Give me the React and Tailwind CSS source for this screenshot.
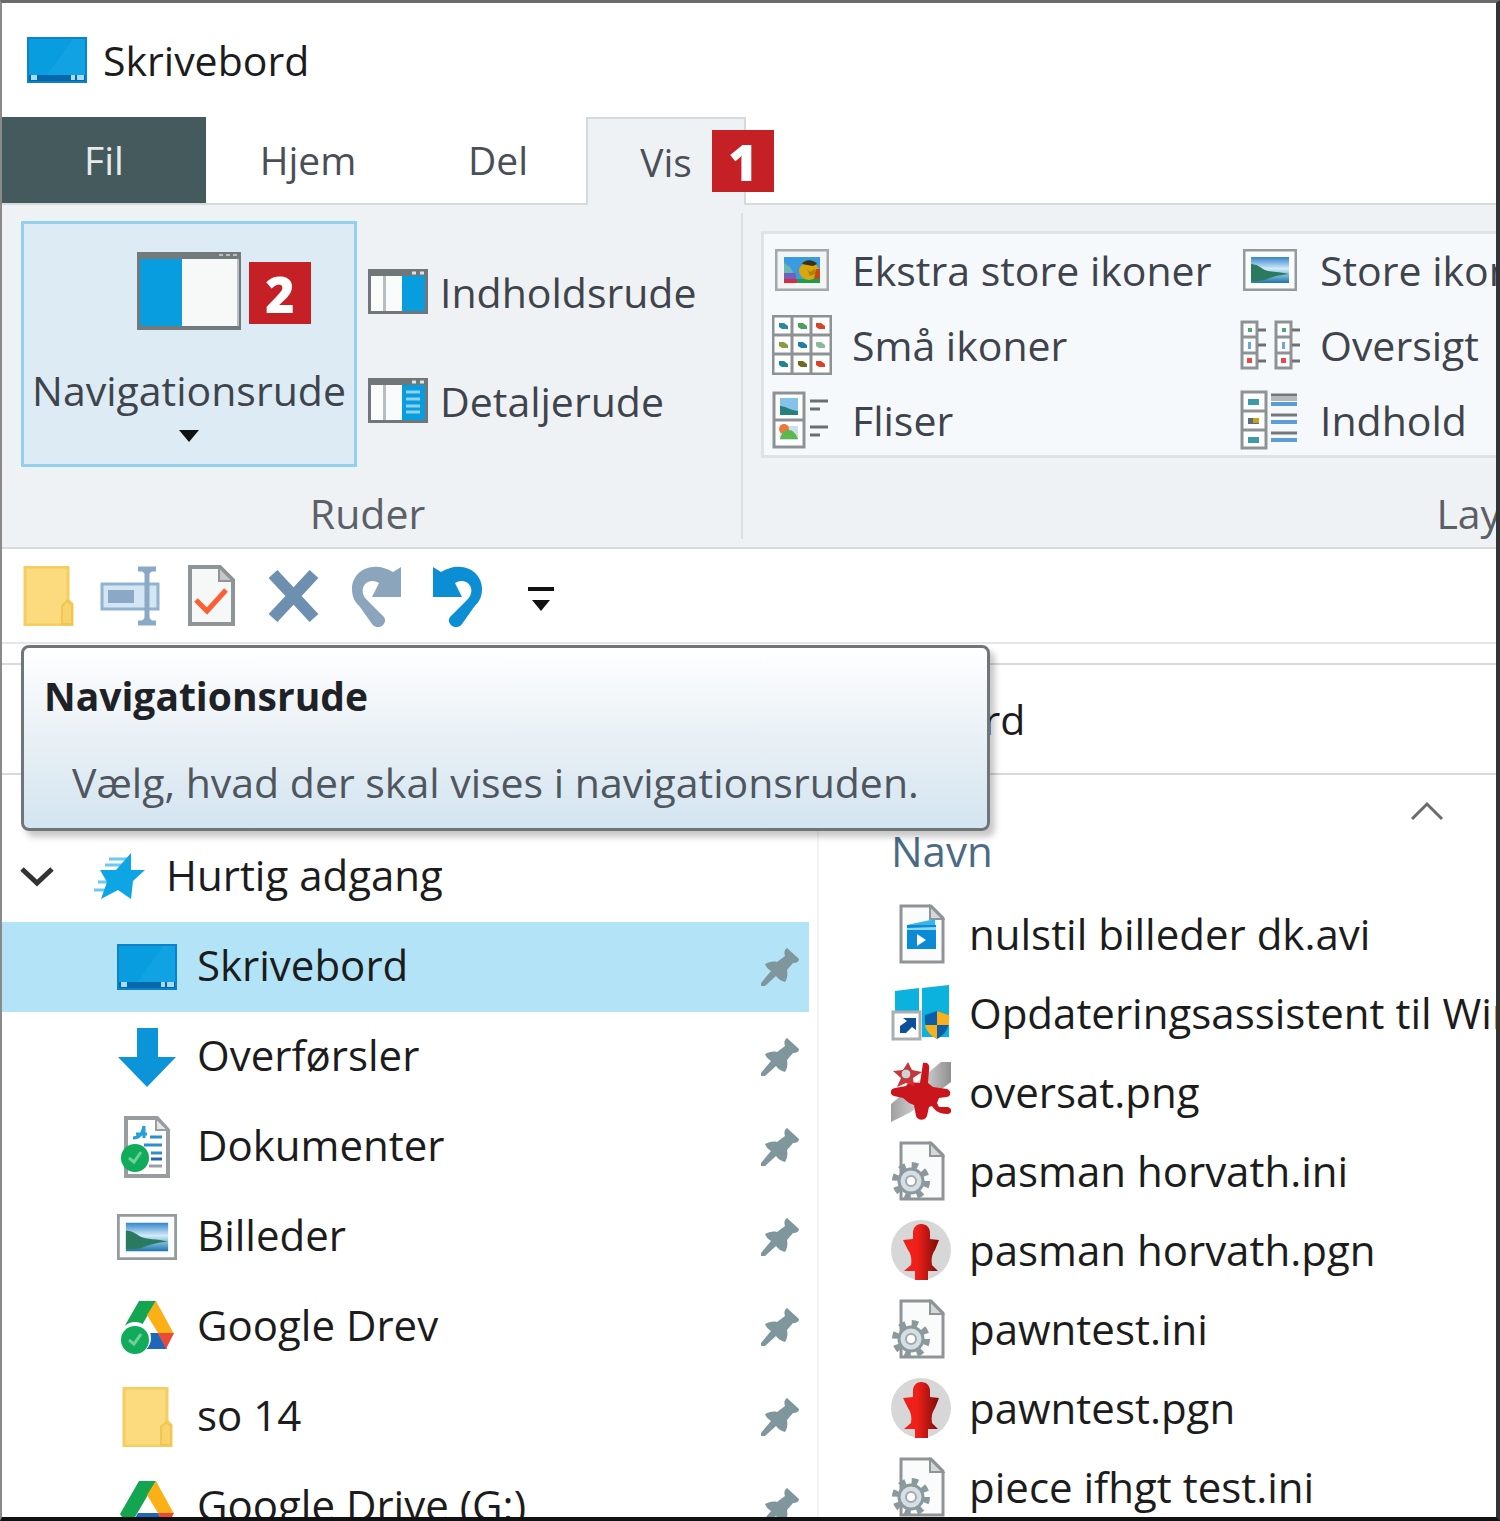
import React, { useState } from 'react';
import clsx from 'clsx';

const DesktopIcon = () => (
  <svg width="60" height="46" viewBox="0 0 60 46">
    <rect width="60" height="46" fill="#0b83cc" />
    <rect x="2" y="2" width="56" height="36" fill="#079ddf" />
    <path d="M58 2v36H20L46 2z" fill="#10a2e2" />
    <rect x="2" y="38" width="56" height="6" fill="#0668a8" />
    <path d="M4 38h6v5H4zM44 38h4v5h-4zM50 38h7v5h-7z" fill="#a8dcf5" />
  </svg>
);

const NavPaneIcon = () => (
  <svg width="104" height="78" viewBox="0 0 104 78">
    <rect width="104" height="78" fill="#737a7c" />
    <rect x="3" y="7" width="98" height="67" fill="#f7f8f8" />
    <rect x="3" y="7" width="42" height="67" fill="#079ddf" />
    <path d="M82 3h4M89 3h4M96 3h4" stroke="#b9bec0" strokeWidth="2" />
    <path d="M101 7v67" stroke="#b9bec0" strokeWidth="2" />
  </svg>
);

const SidePaneIcon = ({ lines }) => (
  <svg width="60" height="45" viewBox="0 0 60 45">
    <rect width="60" height="45" fill="#6f777a" />
    <path d="M3 7h12v35H3zM18 7h16v35H18z" fill="#fafbfb" />
    <rect x="15" y="7" width="3" height="35" fill="#b8bdbf" />
    <rect x="34" y="7" width="23" height="35" fill="#079ddf" />
    <path d="M44 4h4M52 4h4" stroke="#dfe3e4" strokeWidth="3" />
    {lines && <path d="M38 14h14M38 21h14M38 28h14M38 34h14" stroke="#8fd2f2" strokeWidth="3" />}
  </svg>
);

const PictureIcon = ({ wide }) => (
  <svg width={wide ? 60 : 54} height={wide ? 46 : 42} viewBox="0 0 54 42" preserveAspectRatio="none">
    <defs>
      <linearGradient id="sky" x1="0" y1="0" x2="0" y2="1">
        <stop offset="0" stopColor="#3585cc" />
        <stop offset="0.45" stopColor="#d2ebf8" />
        <stop offset="0.7" stopColor="#7bbad6" />
        <stop offset="1" stopColor="#1f74ac" />
      </linearGradient>
    </defs>
    <rect x="1" y="1" width="52" height="40" fill="#fbfcfc" stroke="#959b9d" strokeWidth="3" />
    <rect x="8" y="8" width="38" height="26" fill="url(#sky)" />
    <path d="M8 15c6 0 10 4 14 6s14 2 24 4c-10 1-18 3-24 6-4 1-9 1-14 1z" fill="#2b7a60" />
  </svg>
);

const ExtraLargeIcon = () => (
  <svg width="54" height="42" viewBox="0 0 54 42">
    <rect x="1" y="1" width="52" height="40" fill="#f3f5f5" stroke="#a3a8aa" strokeWidth="3" />
    <rect x="9" y="8" width="36" height="26" fill="#3b9be2" />
    <path d="M9 14l6 4 5 8H9z" fill="#6ab6b0" />
    <path d="M9 24h12v7H9z" fill="#6a63c4" />
    <path d="M9 30h14v4H9z" fill="#e0283c" />
    <path d="M22 30h23v4H22z" fill="#1a9d4c" />
    <ellipse cx="34" cy="22" rx="10" ry="9" fill="#d9a70d" />
    <path d="M27 15c3-5 11-5 15 0l-4 2-6-1z" fill="#3b3212" />
    <path d="M41 20h4v10h-6z" fill="#c2491d" />
    <path d="M32 20l3 3 5-3v5l-5 2z" fill="#a8860c" />
  </svg>
);

const gridDots = [
  [11, 11, '#2a8a9a'], [30, 11, '#49a05c'], [48, 11, '#d8432a'],
  [11, 30, '#8b9b45'], [30, 30, '#1f7f9e'], [48, 30, '#8cb79a'],
  [11, 49, '#1f8590'], [30, 49, '#6d6a24'], [48, 49, '#d8432a'],
];

const SmallGridIcon = () => (
  <svg width="60" height="60" viewBox="0 0 60 60">
    <rect x="1" y="1" width="58" height="58" fill="#fdfdfd" stroke="#8d9395" strokeWidth="3" />
    <path d="M20 1v58M39 1v58M1 20h58M1 39h58" stroke="#8d9395" strokeWidth="3" />
    {gridDots.map(([x, y, color]) => (
      <path key={`${x}-${y}`} d={`M${x - 4} ${y - 3}h5l4 3v3h-6l-3-2z`} fill={color} />
    ))}
  </svg>
);

const TilesIcon = () => (
  <svg width="60" height="58" viewBox="0 0 60 58">
    <rect x="2" y="2" width="30" height="54" fill="#fdfdfd" stroke="#8d9395" strokeWidth="3" />
    <path d="M2 29h30" stroke="#8d9395" strokeWidth="3" />
    <rect x="8" y="7" width="18" height="17" fill="#86c3e8" />
    <path d="M8 15c6 0 9 4 18 5v4H8z" fill="#2a7f7c" />
    <rect x="8" y="35" width="18" height="14" fill="#c9dff0" />
    <circle cx="12" cy="38" r="5" fill="#e8793a" />
    <path d="M8 48c2-7 5-9 9-9s7 4 9 9z" fill="#5cb848" />
    <path d="M38 10h18M38 18h10M38 36h18M38 44h10" stroke="#6a7072" strokeWidth="3" />
  </svg>
);

const ListColumnsIcon = () => (
  <svg width="60" height="50" viewBox="0 0 60 50">
    {[0, 34].map((x) => (
      <g key={x} transform={`translate(${x} 0)`}>
        <rect x="2" y="2" width="15" height="46" fill="#fdfdfd" stroke="#8d9395" strokeWidth="3" />
        <path d="M2 17h15M2 33h15" stroke="#8d9395" strokeWidth="3" />
        <path d="M18 10h8M18 25h8M18 41h8" stroke="#6c7274" strokeWidth="3" />
        <rect x="8" y="8" width="4" height="4" fill="#4fa57a" />
        <rect x="8" y="22" width="3" height="7" fill="#6aa6dc" />
        <rect x="7" y="38" width="5" height="5" fill="#e5484d" />
      </g>
    ))}
  </svg>
);

const ContentIcon = () => (
  <svg width="60" height="60" viewBox="0 0 60 60">
    <rect x="2" y="2" width="24" height="56" fill="#fdfdfd" stroke="#8d9395" strokeWidth="3" />
    <path d="M2 21h24M2 40h24" stroke="#8d9395" strokeWidth="3" />
    <path d="M8 9h11v6H8zM8 47h11v6H8z" fill="#3d9aa6" />
    <path d="M8 28h11v6H8z" fill="#5b6d7a" />
    <path d="M13 28h6v5h-6z" fill="#c3a21c" />
    <path d="M31 5h26M31 25h26M31 43h26" stroke="#73797b" strokeWidth="3" />
    <path d="M31 14h26M31 32h26M31 50h26" stroke="#5d9dd5" strokeWidth="4" />
    <path d="M31 9h26" stroke="#b3b8bb" strokeWidth="4" />
  </svg>
);

const FolderIcon = () => (
  <svg width="60" height="60" viewBox="0 0 60 60">
    <path d="M7 1h43v33l4 4v21H7z" fill="#fbdb7e" stroke="#f5cd60" strokeWidth="3" />
    <path d="M44 58V40l5-5 5 4v19z" fill="#f8d46c" stroke="#f0c552" strokeWidth="2" />
  </svg>
);

const RenameIcon = () => (
  <svg width="60" height="60" viewBox="0 0 60 60">
    <rect x="2" y="18" width="56" height="25" fill="#d4e6f3" stroke="#8fb3d0" strokeWidth="3" />
    <rect x="8" y="24" width="26" height="13" fill="#8ba9c4" />
    <path d="M47 3v54M38 3h18M38 57h18" stroke="#8ba9c4" strokeWidth="5" />
    <path d="M41 4h12l-6 6zM41 56h12l-6-7z" fill="#8ba9c4" />
  </svg>
);

const CheckDocIcon = () => (
  <svg width="60" height="62" viewBox="0 0 60 62">
    <path d="M8 2h30l13 13v44H8z" fill="#f6f7f7" stroke="#8f9496" strokeWidth="4" />
    <path d="M37 2v14h14z" fill="#c3c7c8" stroke="#8f9496" strokeWidth="2" />
    <path d="M14 35l11 11 19-21" fill="none" stroke="#fb6033" strokeWidth="5" />
  </svg>
);

const DeleteIcon = () => (
  <svg width="60" height="62" viewBox="0 0 60 62">
    <path d="M9 9l41 44M50 9L9 53" stroke="#6d90b0" strokeWidth="12" />
  </svg>
);

const UndoIcon = ({ color, flip }) => (
  <svg width="60" height="64" viewBox="0 0 60 64">
    <g transform={flip ? 'translate(60 0) scale(-1 1)' : undefined} fill={color}>
      <path d="M5 3l8 5c7-4 14-6 20-5 13 1 21 11 21 22 0 8-3 13-8 18L34 60c-3 4-8 4-11 1s-3-7 1-10l15-15c4-4 5-8 4-12-2-7-10-9-16-5l7 14H5z" />
    </g>
  </svg>
);

const MoreIcon = () => (
  <svg width="28" height="28" viewBox="0 0 28 28" className="mt-2">
    <rect x="2" y="1" width="26" height="4" fill="#111" />
    <path d="M6 14h18l-9 11z" fill="#111" />
  </svg>
);

const StarIcon = () => (
  <svg width="54" height="48" viewBox="0 0 54 48">
    <path d="M16 6h20M12 12h22M5 29h12M1 37h14" stroke="#6cc8ee" strokeWidth="3" />
    <path d="M38 0v17h14L40 28l-2 18-13-9-17 9 6-17-7-12h16z" fill="#0ea5e4" />
  </svg>
);

const DownloadIcon = () => (
  <svg width="60" height="60" viewBox="0 0 60 60">
    <path d="M20 1h21v29h18L30 60 1 30h19z" fill="#0c94d8" />
  </svg>
);

const SyncBadge = () => (
  <g>
    <circle cx="18" cy="42" r="14" fill="#10ab5b" />
    <path d="M12 42l5 4 7-10" fill="none" stroke="#6fd09c" strokeWidth="3" />
  </g>
);

const DocumentIcon = () => (
  <svg width="60" height="62" viewBox="0 0 60 62">
    <path d="M9 2h31l11 12v46H9z" fill="#fff" stroke="#989d9f" strokeWidth="4" />
    <path d="M39 2v12h12z" fill="#e4e7e8" stroke="#989d9f" strokeWidth="2" />
    <path d="M16 22c7 0 9-4 11-12v12M19 18h11" fill="none" stroke="#25a0d8" strokeWidth="3" />
    <path d="M33 21h12M27 29h18M34 37h11" stroke="#2f8fcd" strokeWidth="3" />
    <path d="M34 43h11" stroke="#2b64a6" strokeWidth="3" />
    <path d="M32 50h13" stroke="#9aa0a2" strokeWidth="3" />
    <SyncBadge />
  </svg>
);

const DriveIcon = ({ synced }) => (
  <svg width="60" height="58" viewBox="0 0 60 58">
    <path d="M22 3h17L21 34l-9 15L3 36z" fill="#14a551" />
    <path d="M39 3l18 33-16-1-11-18z" fill="#fbb116" />
    <path d="M12 51l9-16h20l9 16z" fill="#1f67b8" />
    <path d="M41 35h16l-8 16z" fill="#ea4a35" />
    {synced && <circle cx="18" cy="40" r="16" fill="#fff" />}
    {synced && <SyncBadge />}
  </svg>
);

const PinIcon = () => (
  <svg width="38" height="38" viewBox="0 0 38 38">
    <path d="M26 0l12 11c0 3-3 4-6 4l-6 7c1 5 0 9-2 12-4-1-7-3-9-6L4 38H0v-3l10-12c-3-2-5-4-6-7 4-2 8-3 12-2l8-6c-1-3-1-6 2-8z" fill="#7f969d" />
  </svg>
);

const PagePath = () => (
  <>
    <path d="M10 2h30l12 12v44H10z" fill="#fafbfb" stroke="#8f9496" strokeWidth="3" />
    <path d="M39 2v13h13z" fill="#d5d8d9" stroke="#8f9496" strokeWidth="2" />
  </>
);

const VideoFileIcon = () => (
  <svg width="60" height="60" viewBox="0 0 60 60">
    <PagePath />
    <path d="M16 21l28-6v6z" fill="#35b8e8" />
    <rect x="16" y="21" width="29" height="24" fill="#0c8ad6" />
    <path d="M16 26h29v-3l-29 1z" fill="#8bd7f5" />
    <path d="M26 30l9 6-9 6z" fill="#fff" />
  </svg>
);

const WindowsIcon = () => (
  <svg width="60" height="60" viewBox="0 0 60 60">
    <path d="M4 8l24-3v24H4zM31 5l27-3v52H31z" fill="#0bb2de" />
    <rect x="2" y="29" width="27" height="27" fill="#fff" stroke="#a9afb1" strokeWidth="3" />
    <path d="M9 50v-7l7-5-4-3h13v12l-4-3-6 6z" fill="#0d4f98" />
    <path d="M46 28l12 4c1 12-3 19-12 24-9-5-13-12-12-24z" fill="#0b5ea8" />
    <path d="M46 28l12 4v10H46zM34 42h12v14c-6-3-11-8-12-14z" fill="#fab01b" />
  </svg>
);

const SplashIcon = () => (
  <svg width="60" height="60" viewBox="0 0 60 60">
    <defs>
      <linearGradient id="ribbon" x1="0" x2="1">
        <stop offset="0" stopColor="#a0a0a0" />
        <stop offset="0.5" stopColor="#d8d8d8" />
        <stop offset="1" stopColor="#8f8f8f" />
      </linearGradient>
    </defs>
    <path d="M50 0h10v20L20 50 0 60V42z" fill="url(#ribbon)" />
    <path d="M32 1c5-1 7 2 6 7l-1 13 5 4 14 2c5 2 4 8-1 8l-7 1-2 5 2 4h9c5 2 4 7-1 7-7 0-12-3-15-8l-3 1-2 9c-2 5-9 5-11 0l-2-11-5-2-6-5-9-2c-5-2-4-7 1-8l11-2 3-4 11 1z" fill="#c9151b" />
    <path d="M17 0l4 8 10 2-9 6 1 8-8-3-9 4 4-9-8-7 10-1z" fill="#c9353a" />
    <circle cx="15" cy="12" r="5" fill="#d8cccc" stroke="#8d3c3e" strokeWidth="1" />
  </svg>
);

const ConfigFileIcon = () => (
  <svg width="60" height="60" viewBox="0 0 60 60">
    <PagePath />
    <circle cx="20" cy="40" r="16" fill="none" stroke="#8b999e" strokeWidth="6" strokeDasharray="6.3 6.3" />
    <circle cx="20" cy="40" r="12" fill="#d5dfe3" stroke="#8b999e" strokeWidth="3" />
    <circle cx="20" cy="40" r="5" fill="#fff" stroke="#9faaae" strokeWidth="2" />
  </svg>
);

const PawnIcon = () => (
  <svg width="60" height="60" viewBox="0 0 60 60">
    <defs>
      <linearGradient id="pawn" x1="0" x2="1">
        <stop offset="0.4" stopColor="#ee2019" />
        <stop offset="1" stopColor="#7c0b08" />
      </linearGradient>
    </defs>
    <circle cx="30" cy="30" r="30" fill="#d7d7d7" />
    <path d="M30 4c6 0 9 4 9 9v6l9 1-4 10c-3 4-4 9-3 15l6 6H37v9H24v-9H13l7-6c1-6 0-11-3-15l-5-10 10-1v-6c0-5 3-9 8-9z" fill="url(#pawn)" />
  </svg>
);

const Badge = ({ children, className }) => (
  <span
    className={clsx(
      'absolute w-[62px] h-[62px] bg-[#c52026] text-white text-[50px] leading-[64px] font-extrabold text-center',
      className
    )}
  >
    {children}
  </span>
);

const tabs = [
  { label: 'Hjem', width: 'w-[204px]' },
  { label: 'Del', width: 'w-[176px]' },
  { label: 'Vis', width: 'w-[160px]', badge: '1' },
];

const layouts = [
  { label: 'Ekstra store ikoner', icon: ExtraLargeIcon },
  { label: 'Store ikoner', icon: PictureIcon },
  { label: 'Små ikoner', icon: SmallGridIcon },
  { label: 'Oversigt', icon: ListColumnsIcon },
  { label: 'Fliser', icon: TilesIcon },
  { label: 'Indhold', icon: ContentIcon },
];

const quickTools = [
  { name: 'Ny mappe', icon: <FolderIcon /> },
  { name: 'Omdøb', icon: <RenameIcon /> },
  { name: 'Egenskaber', icon: <CheckDocIcon /> },
  { name: 'Slet', icon: <DeleteIcon /> },
  { name: 'Annuller fortryd', icon: <UndoIcon color="#8ba5bd" flip /> },
  { name: 'Fortryd', icon: <UndoIcon color="#0c8ed4" /> },
  { name: 'Tilpas', icon: <MoreIcon /> },
];

const places = [
  { label: 'Skrivebord', icon: <DesktopIcon /> },
  { label: 'Overførsler', icon: <DownloadIcon /> },
  { label: 'Dokumenter', icon: <DocumentIcon /> },
  { label: 'Billeder', icon: <PictureIcon wide /> },
  { label: 'Google Drev', icon: <DriveIcon synced /> },
  { label: 'so 14', icon: <FolderIcon /> },
  { label: 'Google Drive (G:)', icon: <DriveIcon /> },
];

const files = [
  { name: 'nulstil billeder dk.avi', icon: VideoFileIcon },
  { name: 'Opdateringsassistent til Windows 10', icon: WindowsIcon },
  { name: 'oversat.png', icon: SplashIcon },
  { name: 'pasman horvath.ini', icon: ConfigFileIcon },
  { name: 'pasman horvath.pgn', icon: PawnIcon },
  { name: 'pawntest.ini', icon: ConfigFileIcon },
  { name: 'pawntest.pgn', icon: PawnIcon },
  { name: 'piece ifhgt test.ini', icon: ConfigFileIcon },
];

const Ribbon = () => (
  <div className="flex shrink-0 h-[344px] bg-[#eff2f4] border-b-2 border-[#d5dadb] text-[#3f444c]">
    {/* Panes group */}
    <section className="flex flex-col justify-between shrink-0 w-[739px] pt-4">
      <div className="flex pl-[19px]">
        <button className="relative flex flex-col items-center w-[336px] h-[246px] pt-7 bg-[#dcebf4] border-3 border-[#93d0ec]">
          <NavPaneIcon />
          <Badge className="left-[225px] top-[38px]">2</Badge>
          <span className="mt-8 leading-[56px]">Navigationsrude</span>
          <svg width="20" height="12" viewBox="0 0 20 12" className="mt-3">
            <path d="M0 0h20L10 12z" fill="#111" />
          </svg>
        </button>
        <div className="flex flex-col pt-4 ml-[11px]">
          <button className="flex items-center gap-3 h-[109px]">
            <SidePaneIcon />
            Indholdsrude
          </button>
          <button className="flex items-center gap-3 h-[109px]">
            <SidePaneIcon lines />
            Detaljerude
          </button>
        </div>
      </div>
      <h2 className="h-16 pr-2 leading-[60px] text-center text-[#5b6066]">Ruder</h2>
    </section>
    <div className="w-[2px] shrink-0 my-2 bg-[#dcdfe1]" />

    {/* Layout group */}
    <section className="flex flex-col justify-between shrink-0 pt-[26px] pl-[18px]">
      <div className="grid grid-cols-[468px_468px_530px] gap-y-1 pl-2 border-3 border-[#dfe3e4] bg-[#f6f9fc]">
        {layouts.map(({ label, icon: Icon }, i) => (
          <button
            key={label}
            className={clsx('flex items-center h-[71px] gap-5 text-left whitespace-nowrap', i % 2 ? 'col-start-2' : 'col-start-1')}
          >
            <span className="flex justify-center w-[60px]">
              <Icon />
            </span>
            {label}
          </button>
        ))}
      </div>
      <h2 className="h-16 leading-[60px] text-center text-[#5b6066]">Layout</h2>
    </section>
  </div>
);

const Tooltip = () => (
  <div
    role="tooltip"
    className="absolute left-[19px] top-[1px] z-10 w-[969px] h-[186px] pt-[18px] pl-5 rounded-lg border-3 border-[#6f7679] bg-linear-to-b from-white via-[#e9f0f5] to-[#d3e5f1] shadow-[5px_6px_6px_rgba(0,0,0,0.22)]"
  >
    <p className="text-[39px] leading-[60px] font-bold text-[#1e2227]">Navigationsrude</p>
    <p className="pl-7 mt-[26px] leading-[60px] text-[#50565e] whitespace-nowrap">
      Vælg, hvad der skal vises i navigationsruden.
    </p>
  </div>
);

const Sidebar = ({ selected, onSelect }) => (
  <nav className="shrink-0 w-[817px] pt-[57px] pr-2 border-r-2 border-[#f3f3f3]">
    <button className="flex items-center w-full h-[90px] pl-[18px]">
      <svg width="34" height="20" viewBox="0 0 34 20">
        <path d="M2 2l15 14L32 2" fill="none" stroke="#333" strokeWidth="5" />
      </svg>
      <span className="ml-[39px] mr-[19px]">
        <StarIcon />
      </span>
      <span className="pb-1">Hurtig adgang</span>
    </button>
    <ul>
      {places.map(({ label, icon }) => (
        <li key={label}>
          <button
            onClick={() => onSelect(label)}
            className={clsx(
              'flex items-center w-full h-[90px] pl-[115px] pr-[10px]',
              selected === label && 'bg-[#b3e3f7]'
            )}
          >
            {icon}
            <span className="flex-1 ml-5 pb-1 text-left">{label}</span>
            <PinIcon />
          </button>
        </li>
      ))}
    </ul>
  </nav>
);

const FileList = () => (
  <table className="flex-1 self-start">
    <thead>
      <tr>
        <th className="h-[119px] pl-[72px] font-normal text-left text-[#4a6a85]">
          <div className="flex justify-between pr-[52px]">
            <span className="pt-8 leading-[60px]">Navn</span>
            <svg width="34" height="20" viewBox="0 0 34 20" className="mt-3">
              <path d="M2 18L17 3l15 15" fill="none" stroke="#6c6c6c" strokeWidth="3" />
            </svg>
          </div>
        </th>
      </tr>
    </thead>
    <tbody>
      {files.map(({ name, icon: Icon }) => (
        <tr key={name}>
          <td className="h-[79px] pl-[72px] max-w-0 overflow-hidden">
            <div className="flex items-center gap-[18px] whitespace-nowrap">
              <span className="shrink-0">
                <Icon />
              </span>
              {name}
            </div>
          </td>
        </tr>
      ))}
    </tbody>
  </table>
);

const App = () => {
  const [activeTab, setActiveTab] = useState('Vis');
  const [selected, setSelected] = useState('Skrivebord');

  return (
    <div className="flex flex-col h-screen overflow-hidden bg-white border-t-3 border-l-2 border-r-4 border-b-4 border-t-[#6b6b6b] border-l-[#8a8a8a] border-r-[#333] border-b-[#111] font-['Open_Sans','Noto_Sans',sans-serif] text-[41px] leading-[60px] text-[#1c1c1c]">
      {/* Title bar */}
      <header className="flex items-center shrink-0 gap-4 h-[114px] pl-[25px]">
        <DesktopIcon />
        <h1>Skrivebord</h1>
      </header>

      {/* Tabs */}
      <div className="flex shrink-0 h-[88px] text-[39px] text-[#4a4f57]">
        <button className="w-[204px] bg-[#445a5c] text-[#e6eaea] border-b-2 border-[#d5dadb]">Fil</button>
        {tabs.map(({ label, width, badge }) => (
          <button
            key={label}
            onClick={() => setActiveTab(label)}
            className={clsx(
              'relative',
              width,
              activeTab === label
                ? 'bg-[#eff2f4] border-2 border-b-0 border-[#d5dadb]'
                : 'border-b-2 border-[#d5dadb]'
            )}
          >
            {label}
            {badge && <Badge className="left-[124px] top-[11px]">{badge}</Badge>}
          </button>
        ))}
        <div className="flex-1 border-b-2 border-[#d5dadb]" />
      </div>

      <Ribbon />

      {/* Quick access toolbar */}
      <div className="flex shrink-0 h-[95px] pl-[5px] border-b-2 border-[#e3e7e8]">
        {quickTools.map(({ name, icon }) => (
          <button key={name} aria-label={name} className="flex items-center justify-center w-[82px]">
            {icon}
          </button>
        ))}
      </div>

      <main className="relative flex flex-col flex-1 min-h-0">
        <Tooltip />
        {/* Address bar */}
        <div className="shrink-0 h-[112px] mt-[19px] pl-[817px] leading-[108px] border-y-2 border-[#d9d9d9]">
          Skrivebord
        </div>
        <div className="flex flex-1 min-h-0 overflow-hidden text-[42px]">
          <Sidebar selected={selected} onSelect={setSelected} />
          <FileList />
        </div>
      </main>
    </div>
  );
};

export default App;
